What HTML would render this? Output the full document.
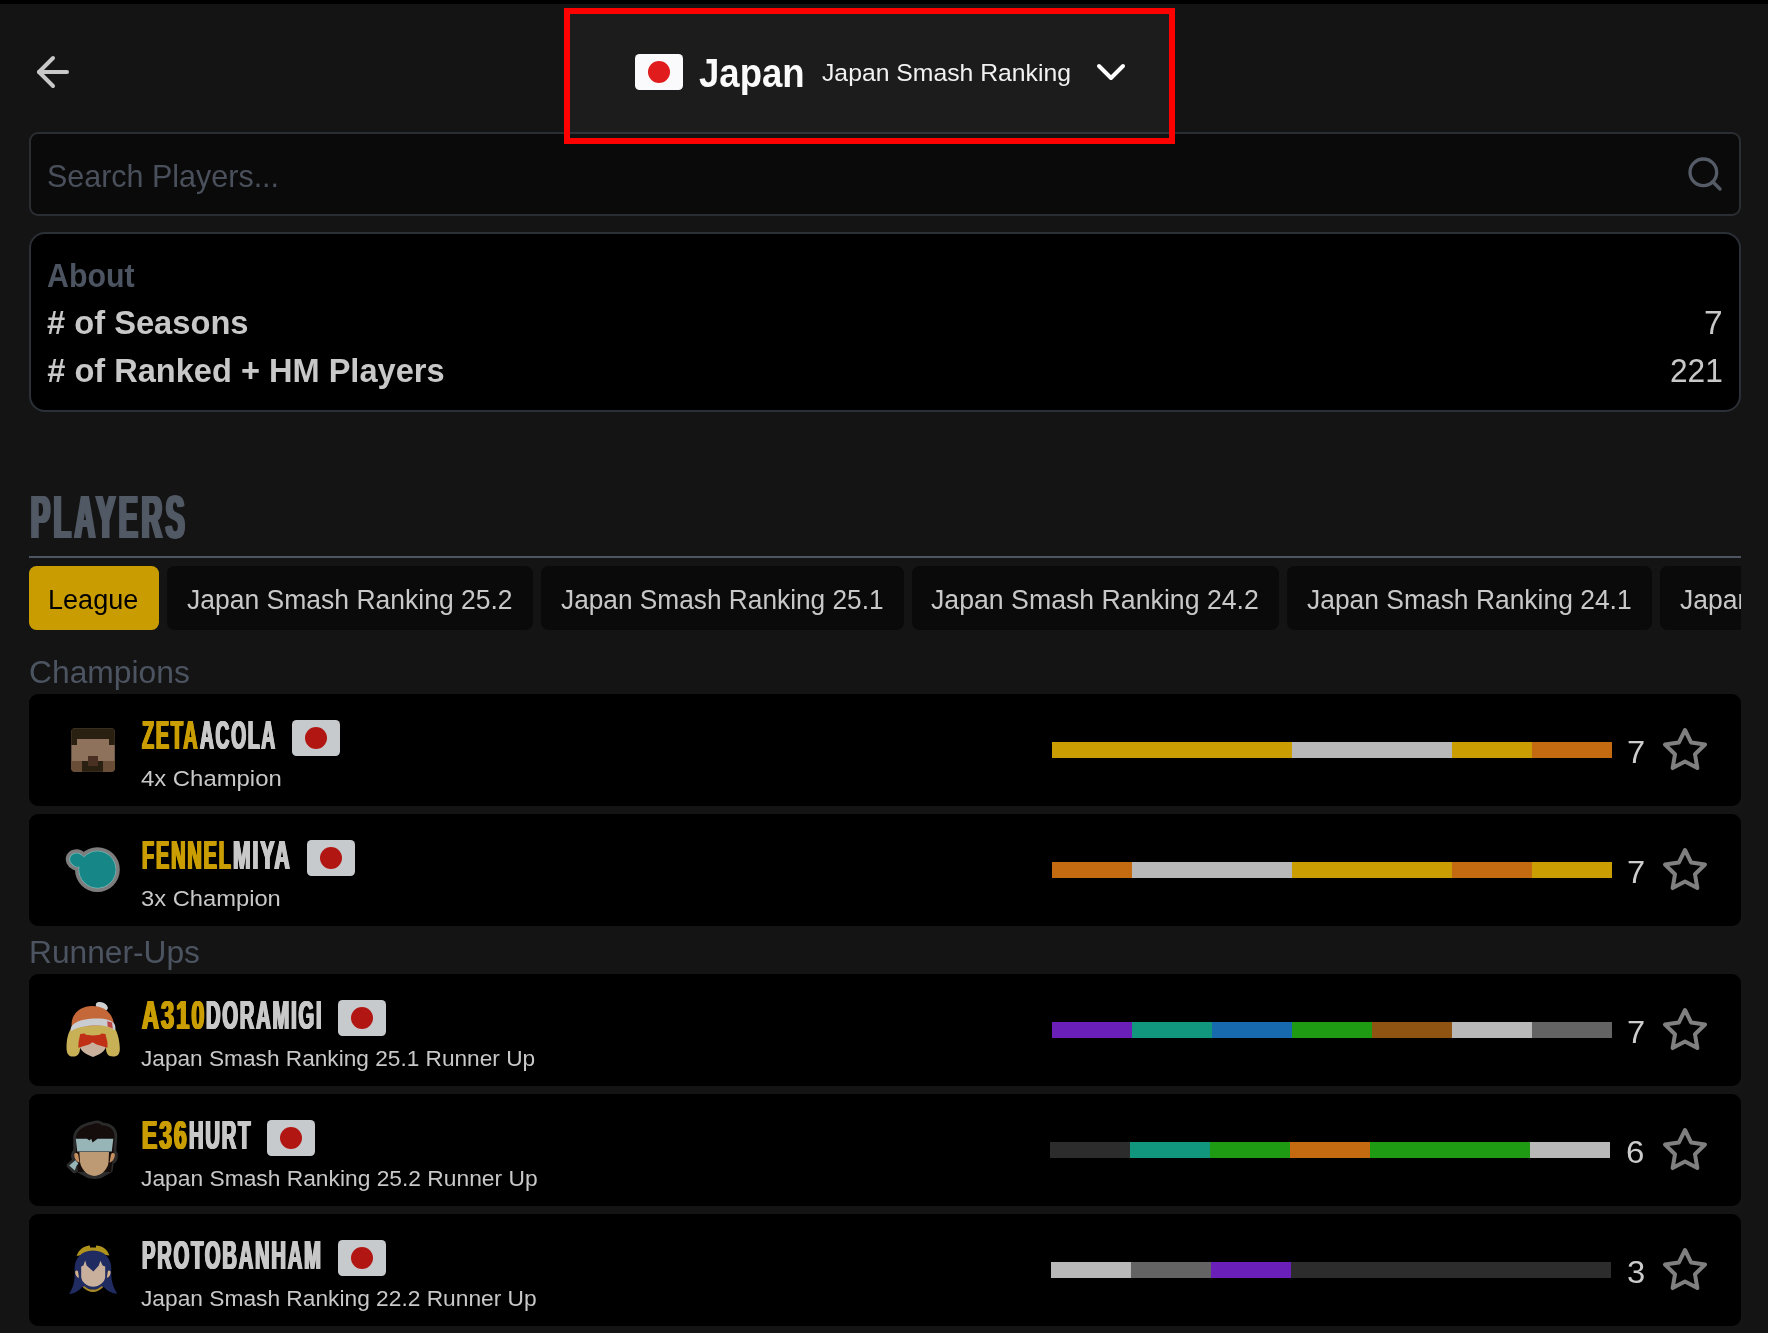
<!DOCTYPE html><html lang="en"><head><meta charset="utf-8"><title>Japan Smash Ranking</title><style>
*{box-sizing:border-box;margin:0;padding:0}
html,body{background:#141414}
body{width:1768px;height:1333px;overflow:hidden;position:relative;font-family:"Liberation Sans",sans-serif;color:#c8c8c8}
#page{will-change:transform;position:absolute;left:0;top:0;width:1768px;height:1333px;overflow:hidden;background:#141414}
.t{position:absolute;white-space:nowrap;line-height:1;transform-origin:0 0;display:block}
.abs{position:absolute}
.topbar{position:absolute;left:0;top:0;width:1768px;height:4px;background:#000}
.dd{position:absolute;left:570px;top:14px;width:599px;height:124px;background:rgba(255,255,255,.034);z-index:3}
.hl{position:absolute;left:564px;top:8px;width:611px;height:136px;border:6px solid #fe0000;z-index:5;pointer-events:none}
.search{position:absolute;left:29px;top:132px;width:1712px;height:84px;background:#0a0a0a;border:2px solid #2a2d32;border-radius:9px;z-index:2}
.about{position:absolute;left:29px;top:232px;width:1712px;height:180px;background:#000;border:2px solid #2b3037;border-radius:16px}
.hr{position:absolute;left:29px;top:556px;width:1712px;height:2px;background:#4d5562}
.tabs{position:absolute;left:29px;top:566px;width:1712px;height:64px;overflow:hidden}
.tab{position:absolute;top:0;height:64px;border-radius:7.5px;background:#0a0a0a}
.tab.on{background:#c99d01}
.card{position:absolute;left:29px;width:1712px;height:112px;background:#000;border-radius:9px}
.flag{position:absolute;width:48px;height:36px;display:block}
.bar{position:absolute;top:48px;height:16px;width:560px;display:flex}
.bar i{display:block;height:16px;width:80px;flex:none}
.p{color:#ca9e02;font-weight:inherit}
h2,h3{font-weight:400;font-size:inherit}
</style></head><body><div id="page">
<div class="topbar"></div>
<header>
<svg class="abs" style="left:29px;top:48px" width="48" height="48" viewBox="0 0 24 24" fill="none" stroke="#c8c8c8" stroke-width="2" stroke-linecap="round" stroke-linejoin="round"><line x1="19" y1="12" x2="5" y2="12"/><polyline points="12 19 5 12 12 5"/></svg>
<div class="dd">
<svg class="flag" style="left:65px;top:40px" viewBox="0 0 48 36"><rect width="48" height="36" rx="4.5" fill="#fafafc"/><circle cx="24" cy="18" r="11" fill="#e01c1c"/></svg>
<span class="t" style="left:129.40px;top:40.12px;font-size:40.25px;color:#fafafa;font-weight:700;transform:scaleX(0.9084);">Japan</span>
<span class="t" style="left:251.86px;top:47.75px;font-size:23.32px;color:#f2f2f2;transform:scaleX(1.0611);">Japan Smash Ranking</span>
<svg class="abs" style="left:517px;top:34px" width="48" height="48" viewBox="0 0 24 24" fill="none" stroke="#fff" stroke-width="2" stroke-linecap="round" stroke-linejoin="round"><polyline points="6 9 12 15 18 9"/></svg>
</div>
</header>
<div class="search">
<span class="t" style="left:16.05px;top:26.51px;font-size:31.29px;color:#4a505b;transform:scaleX(0.9742);">Search Players...</span>
<svg class="abs" style="left:1654px;top:20px" width="40" height="40" viewBox="0 0 24 24" fill="none" stroke="#555c68" stroke-width="2" stroke-linecap="round" stroke-linejoin="round"><circle cx="11" cy="11" r="8"/><line x1="21" y1="21" x2="16.65" y2="16.65"/></svg>
</div>
<section class="about">
<span class="t" style="left:16.33px;top:26.32px;font-size:32.57px;color:#4c5461;font-weight:700;transform:scaleX(0.9317);">About</span>
<span class="t" style="left:16.29px;top:73.02px;font-size:32.57px;color:#c8c8c8;font-weight:700;transform:scaleX(1.0031);"># of Seasons</span>
<span class="t" style="left:1673.23px;top:71.00px;font-size:34.13px;color:#c8c8c8;transform:scaleX(0.9813);">7</span>
<span class="t" style="left:16.29px;top:120.72px;font-size:32.57px;color:#c8c8c8;font-weight:700;"># of Ranked + HM Players</span>
<span class="t" style="left:1638.71px;top:119.10px;font-size:34.13px;color:#c8c8c8;transform:scaleX(0.9284);">221</span>
</section>
<h2><span class="t" style="left:30.88px;top:487.32px;font-size:60.44px;color:#515965;font-weight:700;transform:scaleX(0.4694);letter-spacing:7.9px;text-shadow:1.8px 0 0,-1.8px 0 0,3.5px 0 0,-3.5px 0 0;">PLAYERS</span></h2>
<div class="hr"></div>
<nav class="tabs">
<div class="tab on" style="left:0.0px;width:130.0px">
<span class="t" style="left:19.39px;top:20.02px;font-size:27.73px;color:#000;transform:scaleX(0.9759);">League</span>
</div>
<div class="tab" style="left:138.0px;width:365.6px">
<span class="t" style="left:20.09px;top:19.82px;font-size:27.73px;color:#c8c8c8;transform:scaleX(0.9560);">Japan Smash Ranking 25.2</span>
</div>
<div class="tab" style="left:512.2px;width:362.6px">
<span class="t" style="left:19.64px;top:19.82px;font-size:27.73px;color:#c8c8c8;transform:scaleX(0.9472);">Japan Smash Ranking 25.1</span>
</div>
<div class="tab" style="left:883.0px;width:367.3px">
<span class="t" style="left:19.08px;top:19.82px;font-size:27.73px;color:#c8c8c8;transform:scaleX(0.9627);">Japan Smash Ranking 24.2</span>
</div>
<div class="tab" style="left:1258.3px;width:364.9px">
<span class="t" style="left:19.69px;top:19.82px;font-size:27.73px;color:#c8c8c8;transform:scaleX(0.9532);">Japan Smash Ranking 24.1</span>
</div>
<div class="tab" style="left:1631.0px;width:366.0px">
<span class="t" style="left:19.59px;top:19.82px;font-size:27.73px;color:#c8c8c8;transform:scaleX(0.9553);">Japan Smash Ranking 23.2</span>
</div>
</nav>
<h3><span class="t" style="left:29.01px;top:657.67px;font-size:30.86px;color:#4c5461;transform:scaleX(1.0300);">Champions</span></h3>
<article class="card" style="top:694px">
<svg class="abs" style="left:21px;top:16px" width="90" height="80" viewBox="0 0 90 80" shape-rendering="crispEdges">
<defs><clipPath id="sc"><rect x="21.3" y="18.3" width="43.5" height="43.5" rx="3.5"/></clipPath></defs>
<g clip-path="url(#sc)">
<rect x="21.3" y="18.3" width="43.5" height="43.5" fill="#8f725b"/>
<rect x="21.3" y="18.3" width="43.5" height="10.6" fill="#2a2011"/>
<rect x="21.3" y="28.9" width="5.6" height="5.9" fill="#2a2011"/>
<rect x="59.2" y="28.9" width="5.6" height="5.9" fill="#2a2011"/>
<rect x="21.3" y="50.9" width="43.5" height="10.9" fill="#694d37"/>
<rect x="32.4" y="50.9" width="20.8" height="10.9" fill="#2a2011"/>
<rect x="37.8" y="45.6" width="10.3" height="10.4" fill="#4a3023"/>
</g></svg>
<div class="name">
<span class="t" style="left:113.28px;top:22.16px;font-size:39.96px;color:#ca9e02;font-weight:700;transform:scaleX(0.4961);letter-spacing:3.6px;text-shadow:0.8px 0 0,-0.8px 0 0,1.6px 0 0,-1.6px 0 0;">ZETA</span>
<span class="t" style="left:171.12px;top:22.16px;font-size:39.96px;color:#c8c8c8;font-weight:700;transform:scaleX(0.4807);letter-spacing:3.6px;text-shadow:0.8px 0 0,-0.8px 0 0,1.6px 0 0,-1.6px 0 0;">ACOLA</span>
</div>
<svg class="flag" style="left:263px;top:26px" viewBox="0 0 48 36"><rect width="48" height="36" rx="4.5" fill="#c6cacd"/><circle cx="24" cy="18" r="11" fill="#b21612"/></svg>
<span class="t" style="left:112.13px;top:74.33px;font-size:22.40px;color:#c8c8c8;transform:scaleX(1.0669);">4x Champion</span>
<div class="bar" style="left:1023px"><i style="background:#ca9e02"></i><i style="background:#ca9e02"></i><i style="background:#ca9e02"></i><i style="background:#b8b8b8"></i><i style="background:#b8b8b8"></i><i style="background:#ca9e02"></i><i style="background:#c46b12"></i></div>
<span class="t" style="left:1598.17px;top:42.51px;font-size:31.29px;color:#cccccc;transform:scaleX(1.0432);">7</span>
<svg class="abs" style="left:1632px;top:32px" width="48" height="48" viewBox="0 0 24 24" fill="none" stroke="#808080" stroke-width="2" stroke-linecap="round" stroke-linejoin="round"><polygon points="12 2 15.09 8.26 22 9.27 17 14.14 18.18 21.02 12 17.77 5.82 21.02 7 14.14 2 9.27 8.91 8.26 12 2"/></svg>
</article>
<article class="card" style="top:814px">
<svg class="abs" style="left:21px;top:16px" width="90" height="80" viewBox="0 0 90 80">
<g stroke="#7d7d7d" stroke-width="8" stroke-linejoin="round" fill="#7d7d7d"><circle cx="47.4" cy="39.6" r="18.4"/><ellipse cx="27.2" cy="30" rx="7.6" ry="6.6" transform="rotate(25 27.2 30)"/></g>
<g fill="#168786" stroke="#7fcfd0" stroke-width="0.7"><circle cx="47.4" cy="39.6" r="18.4"/><ellipse cx="27.2" cy="30" rx="7.6" ry="6.6" transform="rotate(25 27.2 30)"/></g>
<g fill="#168786"><circle cx="47.4" cy="39.6" r="18"/><ellipse cx="27.6" cy="30.2" rx="7.6" ry="6.4" transform="rotate(25 27.6 30.2)"/></g>
</svg>
<div class="name">
<span class="t" style="left:113.05px;top:22.16px;font-size:39.96px;color:#ca9e02;font-weight:700;transform:scaleX(0.5003);letter-spacing:3.6px;text-shadow:0.8px 0 0,-0.8px 0 0,1.6px 0 0,-1.6px 0 0;">FENNEL</span>
<span class="t" style="left:204.03px;top:22.16px;font-size:39.96px;color:#c8c8c8;font-weight:700;transform:scaleX(0.5291);letter-spacing:3.6px;text-shadow:0.8px 0 0,-0.8px 0 0,1.6px 0 0,-1.6px 0 0;">MIYA</span>
</div>
<svg class="flag" style="left:278px;top:26px" viewBox="0 0 48 36"><rect width="48" height="36" rx="4.5" fill="#c6cacd"/><circle cx="24" cy="18" r="11" fill="#b21612"/></svg>
<span class="t" style="left:111.76px;top:74.33px;font-size:22.40px;color:#c8c8c8;transform:scaleX(1.0598);">3x Champion</span>
<div class="bar" style="left:1023px"><i style="background:#c46b12"></i><i style="background:#b8b8b8"></i><i style="background:#b8b8b8"></i><i style="background:#ca9e02"></i><i style="background:#ca9e02"></i><i style="background:#c46b12"></i><i style="background:#ca9e02"></i></div>
<span class="t" style="left:1598.17px;top:42.51px;font-size:31.29px;color:#cccccc;transform:scaleX(1.0432);">7</span>
<svg class="abs" style="left:1632px;top:32px" width="48" height="48" viewBox="0 0 24 24" fill="none" stroke="#808080" stroke-width="2" stroke-linecap="round" stroke-linejoin="round"><polygon points="12 2 15.09 8.26 22 9.27 17 14.14 18.18 21.02 12 17.77 5.82 21.02 7 14.14 2 9.27 8.91 8.26 12 2"/></svg>
</article>
<h3><span class="t" style="left:29.02px;top:937.57px;font-size:30.86px;color:#4c5461;transform:scaleX(1.0276);">Runner-Ups</span></h3>
<article class="card" style="top:974px">
<svg class="abs" style="left:21px;top:16px" width="90" height="80" viewBox="0 0 90 80">
<ellipse cx="51.8" cy="16.4" rx="6.4" ry="4" transform="rotate(24 51.8 16.4)" fill="#cfd0d2"/>
<path d="M21.6 34 C22 22 32 16 42 16 C54 16 63 23 64 35 L64 38 L21.6 38 Z" fill="#c4683a"/>
<path d="M16.5 56 C17 46 19 40 23 37 L62 35 C67 40 69.5 48 69.8 58 C70 64 68 66.5 63 66.5 C58 66.5 56 63 56 58 L56 45 L30 45 L30 58 C30 63 28 66.6 23 66.6 C18 66.6 16.3 63 16.5 56 Z" fill="#c7b055"/>
<path d="M21 37.5 C23 33 29 29.5 43 28.5 C55 28 62 30 64.5 34 C65.6 36 65.6 39 65 40.5 C60 36 52 35 43 35.6 C33 36.2 26 38 21.2 41.2 C20.6 40 20.6 38.6 21 37.5 Z" fill="#c9ccd0"/>
<path d="M57.3 31.2 L62 32.6 L62.8 38.4 L57.6 36.6 Z" fill="#c04545"/>
<path d="M29 39 L34 39 L34.6 43 L36 44 L50 44 L51 39.5 L56 39.5 L57 48 L57.6 57 L28.2 57 L29 48 Z" fill="#c7b055"/>
<path d="M30.2 44 L34.5 43.6 L36 44.8 L43 45.4 L50 44.8 L51.5 43.6 L55.4 44 L57.4 52 L57.6 57.5 L28.2 57.5 L28.6 52 Z" fill="#c03017"/>
<path d="M30 57.2 L39 54.6 L42.6 52.2 L46.6 54.6 L55.8 57.2 C55 61 49.5 64.6 43 67 C36.5 64.6 31 61 30 57.2 Z" fill="#c8b09c"/>
</svg>
<div class="name">
<span class="t" style="left:112.82px;top:22.16px;font-size:39.96px;color:#ca9e02;font-weight:700;transform:scaleX(0.5872);letter-spacing:3.6px;text-shadow:0.8px 0 0,-0.8px 0 0,1.6px 0 0,-1.6px 0 0;">A310</span>
<span class="t" style="left:177.05px;top:22.16px;font-size:39.96px;color:#c8c8c8;font-weight:700;transform:scaleX(0.5037);letter-spacing:3.6px;text-shadow:0.8px 0 0,-0.8px 0 0,1.6px 0 0,-1.6px 0 0;">DORAMIGI</span>
</div>
<svg class="flag" style="left:309px;top:26px" viewBox="0 0 48 36"><rect width="48" height="36" rx="4.5" fill="#c6cacd"/><circle cx="24" cy="18" r="11" fill="#b21612"/></svg>
<span class="t" style="left:112.15px;top:74.33px;font-size:22.40px;color:#c8c8c8;transform:scaleX(1.0116);">Japan Smash Ranking 25.1 Runner Up</span>
<div class="bar" style="left:1023px"><i style="background:#6a1fb8"></i><i style="background:#12977f"></i><i style="background:#176aad"></i><i style="background:#1e9a13"></i><i style="background:#905412"></i><i style="background:#b8b8b8"></i><i style="background:#636363"></i></div>
<span class="t" style="left:1598.17px;top:42.51px;font-size:31.29px;color:#cccccc;transform:scaleX(1.0432);">7</span>
<svg class="abs" style="left:1632px;top:32px" width="48" height="48" viewBox="0 0 24 24" fill="none" stroke="#808080" stroke-width="2" stroke-linecap="round" stroke-linejoin="round"><polygon points="12 2 15.09 8.26 22 9.27 17 14.14 18.18 21.02 12 17.77 5.82 21.02 7 14.14 2 9.27 8.91 8.26 12 2"/></svg>
</article>
<article class="card" style="top:1094px">
<svg class="abs" style="left:21px;top:16px" width="90" height="80" viewBox="0 0 90 80">
<g stroke="#2b2b2b" stroke-width="5.5" stroke-linejoin="round" fill="#2b2b2b">
<path d="M26 30 C25 22 32 16 42 14.5 C46 12.5 50 13 52 15.5 C60 15 65 20 64.5 28 L63.5 41 L65 44 C65.5 48 64 51 61 52 L60 60 L50 65.5 L44.5 66.3 L39 65.5 L29 60 L27.5 52 L24.5 60.5 L19.5 55.5 L25.5 50 C24 48 23.5 45 24.5 43 L26 41 Z"/></g>
<path d="M26 30 C25 22 32 16 42 14.5 C46 12.5 50 13 52 15.5 C60 15 65 20 64.5 28 L63.5 42 L61 62 L28 62 L26 42 Z" fill="#140d0b"/>
<path d="M24.3 44 C25.5 42.5 27.5 43 28.2 44.5 L29.5 52.5 C26.5 52 24 48 24.3 44 Z M64.8 44 C63.6 42.5 61.6 43 60.9 44.5 L59.6 52.5 C62.6 52 65.1 48 64.8 44 Z" fill="#c68f60"/>
<path d="M29.4 42 L59 42 L58.6 52 C58 58 53 64 47 65.6 L44.4 66 L41.8 65.6 C35.5 64 31 58 30 52 Z" fill="#be9a74"/>
<path d="M25.8 28.8 L37 28.8 L39.5 30.6 L41.2 28.8 L42.6 32.4 L47.5 28.8 L63.3 28.8 L61.8 41.4 L27.2 41.4 Z" fill="#97b4b7"/>
<path d="M19.2 55.6 L25.4 50.2 L28.4 53.6 L26.4 56 L24.8 60.6 Z" fill="#97b4b7"/>
</svg>
<div class="name">
<span class="t" style="left:112.99px;top:22.16px;font-size:39.96px;color:#ca9e02;font-weight:700;transform:scaleX(0.5704);letter-spacing:3.6px;text-shadow:0.8px 0 0,-0.8px 0 0,1.6px 0 0,-1.6px 0 0;">E36</span>
<span class="t" style="left:159.55px;top:22.16px;font-size:39.96px;color:#c8c8c8;font-weight:700;transform:scaleX(0.5047);letter-spacing:3.6px;text-shadow:0.8px 0 0,-0.8px 0 0,1.6px 0 0,-1.6px 0 0;">HURT</span>
</div>
<svg class="flag" style="left:238px;top:26px" viewBox="0 0 48 36"><rect width="48" height="36" rx="4.5" fill="#c6cacd"/><circle cx="24" cy="18" r="11" fill="#b21612"/></svg>
<span class="t" style="left:112.14px;top:74.33px;font-size:22.40px;color:#c8c8c8;transform:scaleX(1.0180);">Japan Smash Ranking 25.2 Runner Up</span>
<div class="bar" style="left:1021px"><i style="background:#2c2c2c"></i><i style="background:#12977f"></i><i style="background:#1e9a13"></i><i style="background:#c46b12"></i><i style="background:#1e9a13"></i><i style="background:#1e9a13"></i><i style="background:#b8b8b8"></i></div>
<span class="t" style="left:1597.25px;top:42.51px;font-size:31.29px;color:#cccccc;transform:scaleX(1.0568);">6</span>
<svg class="abs" style="left:1632px;top:32px" width="48" height="48" viewBox="0 0 24 24" fill="none" stroke="#808080" stroke-width="2" stroke-linecap="round" stroke-linejoin="round"><polygon points="12 2 15.09 8.26 22 9.27 17 14.14 18.18 21.02 12 17.77 5.82 21.02 7 14.14 2 9.27 8.91 8.26 12 2"/></svg>
</article>
<article class="card" style="top:1214px">
<svg class="abs" style="left:21px;top:16px" width="90" height="80" viewBox="0 0 90 80">
<path d="M26.6 26 C29 19 35 15.6 40 15.6 L40 17.6 L46 17.6 L46 15.6 C52 15.6 57.4 19.4 59.4 25.6 L43 23 Z" fill="#b0931c"/>
<path d="M24.6 40 C24 30 30 20.6 43 20.6 C56 20.6 61.8 30 61.2 40 C61 48 62 56 67.4 63.8 C62 63.6 57 61 54 57 L43 60 L32 57 C29 61 24.6 63.6 19 64 C24.4 56 25 48 24.6 40 Z" fill="#1f2b61"/>
<path d="M32.8 57.2 C36 60.4 39.6 62 43 62 C46.6 62 50 60.4 53 57.2 L52 56 C48 59 46 59.6 43 59.6 C40 59.6 37.6 59 34 56 Z" fill="#a88a2a"/>
<path d="M25.2 41.4 C26.4 40 27.6 40.4 28 41.6 L29 48 C26.4 47 25 44.4 25.2 41.4 Z M60.6 41.4 C59.4 40 58.2 40.4 57.8 41.6 L56.8 48 C59.4 47 60.8 44.4 60.6 41.4 Z" fill="#d8b48c"/>
<path d="M31.2 36.4 L33.4 35.6 L35.2 30.6 L36.6 35.4 L43.4 41.6 L48.8 35.4 L50.4 30.8 L52.6 35.6 L55.2 36.6 L55.2 47 C55 52 49 56.8 43.2 56.8 C37.4 56.8 31.4 52 31.2 47 Z" fill="#c8b09c"/>
</svg>
<div class="name">
<span class="t" style="left:112.95px;top:22.16px;font-size:39.96px;color:#c8c8c8;font-weight:700;transform:scaleX(0.5042);letter-spacing:3.6px;text-shadow:0.8px 0 0,-0.8px 0 0,1.6px 0 0,-1.6px 0 0;">PROTOBANHAM</span>
</div>
<svg class="flag" style="left:309px;top:26px" viewBox="0 0 48 36"><rect width="48" height="36" rx="4.5" fill="#c6cacd"/><circle cx="24" cy="18" r="11" fill="#b21612"/></svg>
<span class="t" style="left:112.14px;top:74.33px;font-size:22.40px;color:#c8c8c8;transform:scaleX(1.0155);">Japan Smash Ranking 22.2 Runner Up</span>
<div class="bar" style="left:1022px"><i style="background:#b8b8b8"></i><i style="background:#636363"></i><i style="background:#6a1fb8"></i><i style="background:#2c2c2c"></i><i style="background:#2c2c2c"></i><i style="background:#2c2c2c"></i><i style="background:#2c2c2c"></i></div>
<span class="t" style="left:1597.77px;top:42.51px;font-size:31.29px;color:#cccccc;transform:scaleX(1.0491);">3</span>
<svg class="abs" style="left:1632px;top:32px" width="48" height="48" viewBox="0 0 24 24" fill="none" stroke="#808080" stroke-width="2" stroke-linecap="round" stroke-linejoin="round"><polygon points="12 2 15.09 8.26 22 9.27 17 14.14 18.18 21.02 12 17.77 5.82 21.02 7 14.14 2 9.27 8.91 8.26 12 2"/></svg>
</article>
<div class="hl"></div>
</div></body></html>
